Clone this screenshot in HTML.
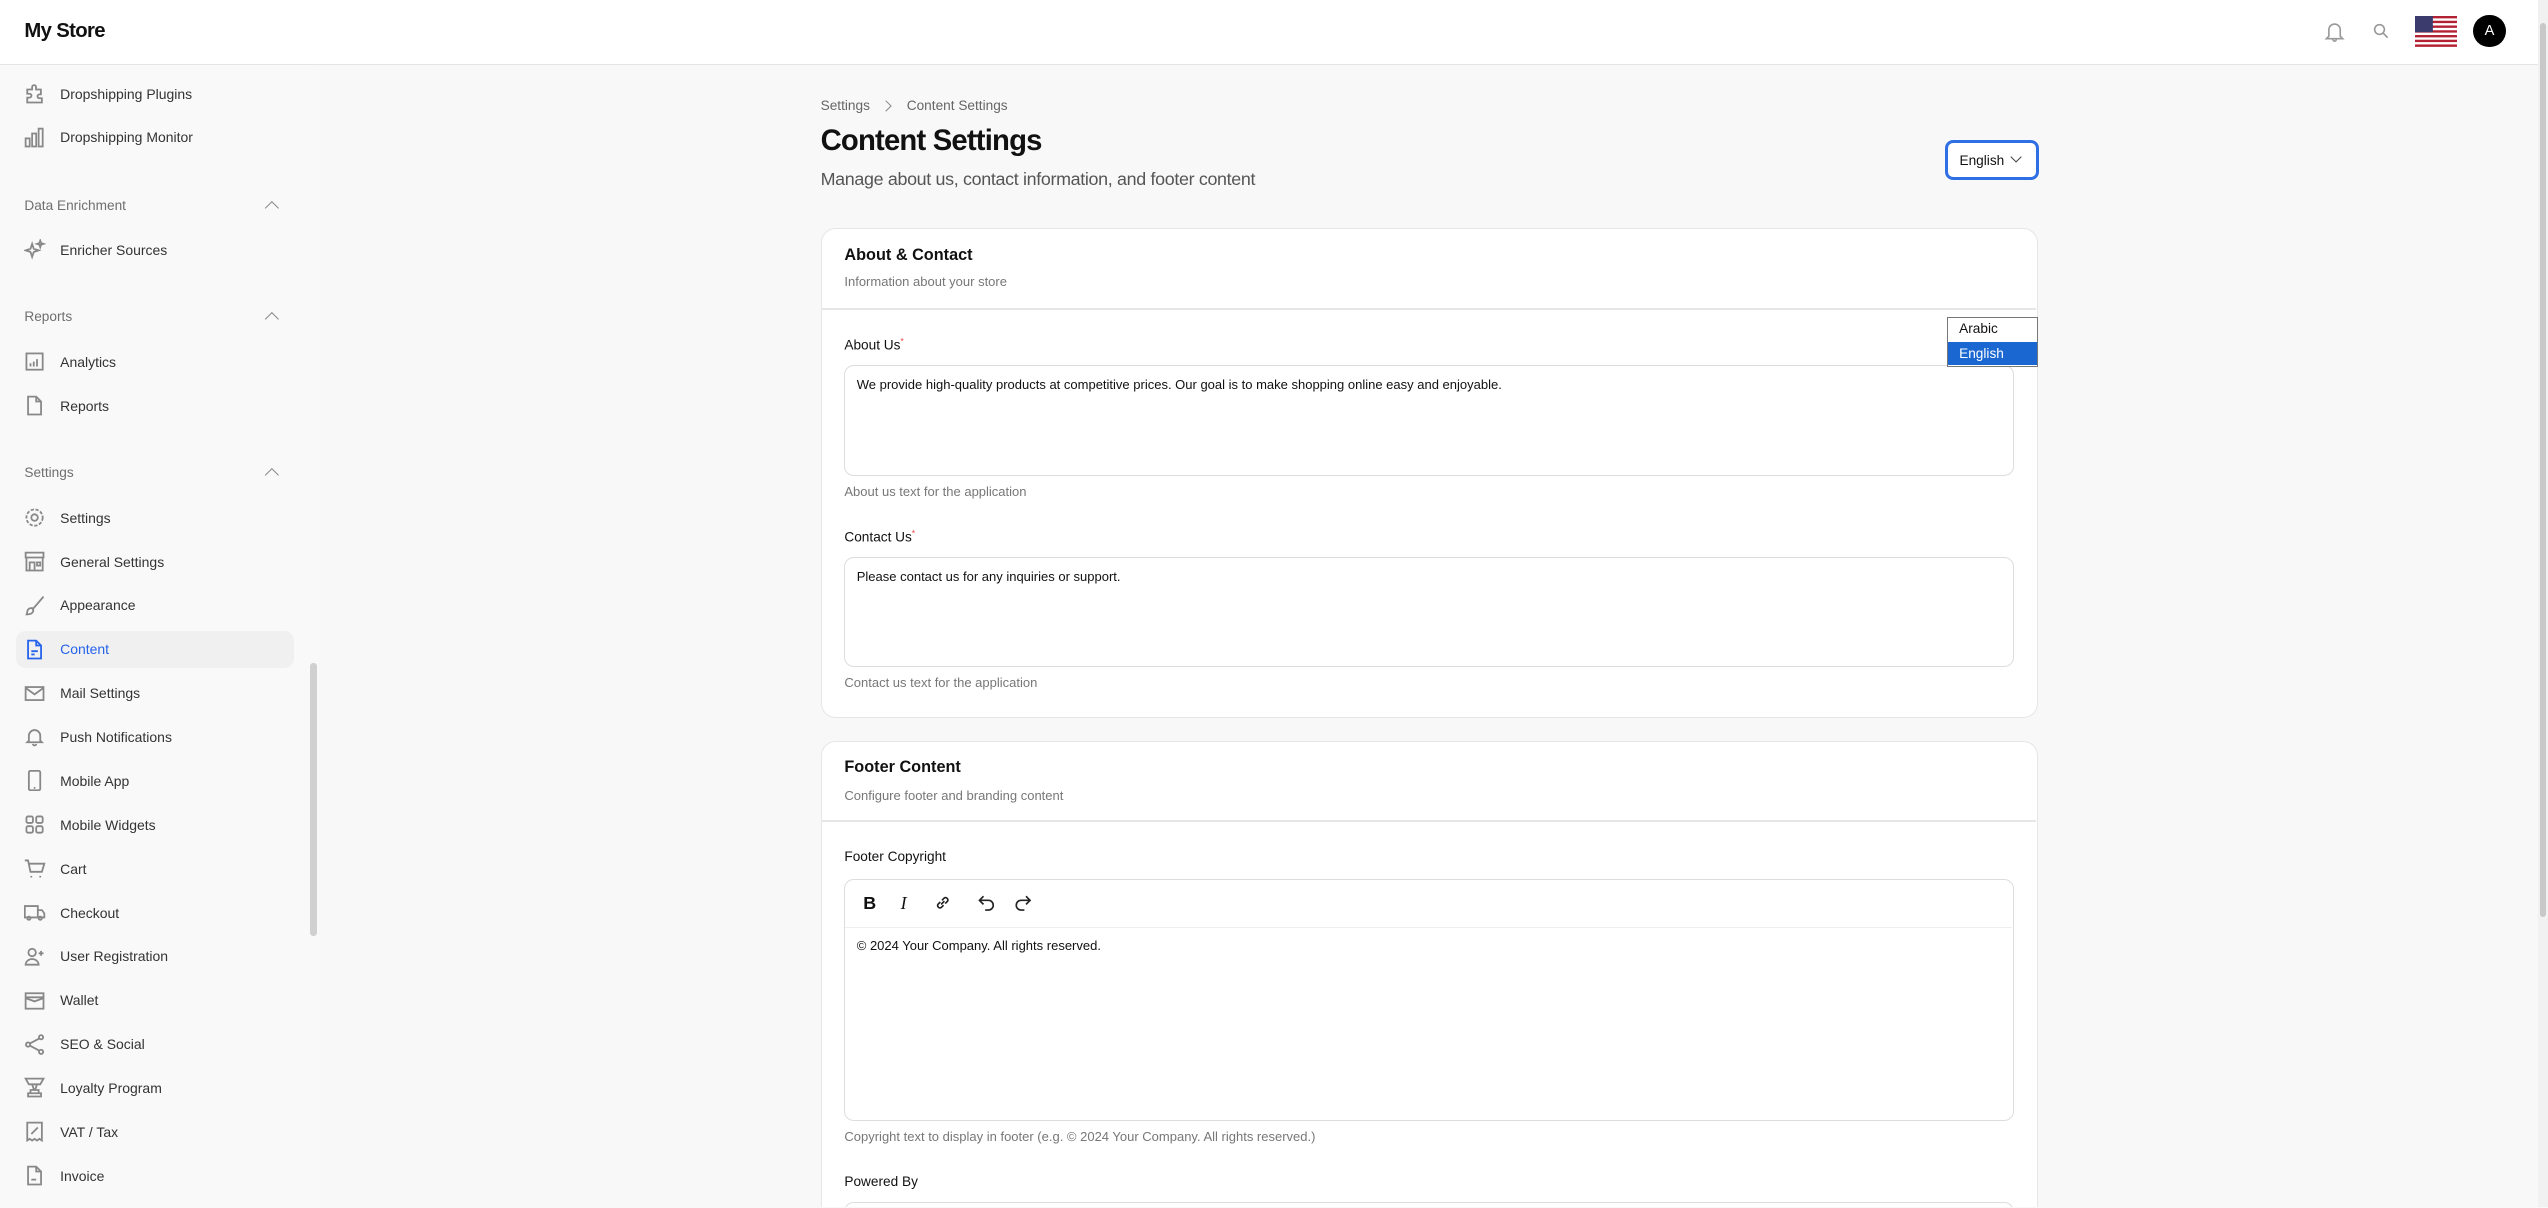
<!DOCTYPE html>
<html><head><meta charset="utf-8"><style>
*{box-sizing:border-box;margin:0;padding:0}
html,body{width:2548px;height:1208px;overflow:hidden;background:#f8f8f8}
#z{zoom:1.625;width:1568px;height:743px;position:relative;font-family:"Liberation Sans",sans-serif;color:#111;overflow:hidden;background:#f8f8f8}
.a{position:absolute;white-space:nowrap}
.hdr{left:0;top:0;width:1562px;height:40px;background:#fff;border-bottom:1px solid #e4e4e4}
.side{left:0;top:40px;width:196px;height:703px;background:#f9f9f9}
.it{position:absolute;left:15px;font-size:8.6px;color:#333;line-height:12px;white-space:nowrap}
.it svg{position:absolute;left:0;top:-1px;width:13px;height:13px;fill:none;stroke:#888;stroke-width:1.1}
.it span{position:absolute;left:22px;top:0;white-space:nowrap}
.sec{position:absolute;left:15px;font-size:8.4px;color:#6f6f6f}
.car{position:absolute;left:164px;width:6px;height:6px;border-left:1px solid #888;border-top:1px solid #888;transform:rotate(45deg)}
.card{position:absolute;left:505px;width:749px;background:#fff;border:1px solid #e6e6e6;border-radius:9px}
.lab{font-size:8.4px;color:#111}
.help{font-size:8px;color:#777}
.ta{position:absolute;left:14px;width:720px;border:1px solid #ddd;border-radius:6px;background:#fff;font-size:8px;padding:7px}
</style></head><body><div id="z">
<div class="a hdr"></div>
<div class="a" style="left:15px;top:12px;font-size:12.5px;font-weight:bold;letter-spacing:-0.4px">My Store</div>
<svg class="a" style="left:1430px;top:12px" width="13" height="14" viewBox="0 0 13 14" fill="none" stroke="#999" stroke-width="1"><path d="M3 10V6a3.5 3.5 0 017 0v4l1.5 1.5h-10z M5.5 12a1 1 0 002 0"/></svg>
<svg class="a" style="left:1460px;top:14px" width="10" height="10" viewBox="0 0 10 10" fill="none" stroke="#999" stroke-width="1"><circle cx="4" cy="4" r="3"/><path d="M6.3 6.3L9 9"/></svg>
<svg class="a" style="left:1486px;top:10px" width="26" height="19" viewBox="0 0 26 19"><rect width="26" height="19" fill="#fff"/><g fill="#b22234"><rect y="0" width="26" height="1.46"/><rect y="2.92" width="26" height="1.46"/><rect y="5.84" width="26" height="1.46"/><rect y="8.77" width="26" height="1.46"/><rect y="11.7" width="26" height="1.46"/><rect y="14.6" width="26" height="1.46"/><rect y="17.5" width="26" height="1.5"/></g><rect width="11" height="10" fill="#3c3b6e"/></svg>
<div class="a" style="left:1522px;top:9px;width:20px;height:20px;border-radius:50%;background:#000;color:#fff;font-size:9px;text-align:center;line-height:20px">A</div>
<div class="a" style="left:1562px;top:0;width:6px;height:743px;background:#f1f1f1"></div>
<div class="a" style="left:1563px;top:14px;width:4px;height:550px;background:#c8c8c8;border-radius:2px"></div>

<div class="a side"></div>
<div class="a" style="left:191px;top:408px;width:4px;height:168px;background:#d0d0d0;border-radius:2px"></div>
<div class="a" style="left:10px;top:388px;width:171px;height:23px;background:#f0f0f0;border-radius:6px"></div>

<div class="it" style="top:52px"><svg viewBox="0 0 13 13"><path d="M2 4h3V2.5a1.2 1.2 0 012.4 0V4h3v3H9.5a1.2 1.2 0 000 2.4H11v2.6H2V9h1.4a1.2 1.2 0 000-2.4H2z"/></svg><span>Dropshipping Plugins</span></div>
<div class="it" style="top:79px"><svg viewBox="0 0 13 13"><rect x="1" y="7" width="2.5" height="5"/><rect x="5" y="4" width="2.5" height="8"/><rect x="9" y="1" width="2.5" height="11"/></svg><span>Dropshipping Monitor</span></div>
<div class="sec" style="top:122px">Data Enrichment</div><div class="car" style="top:125px"></div>
<div class="it" style="top:148px"><svg viewBox="0 0 13 13"><path d="M5 3l1 3 3 1-3 1-1 3-1-3-3-1 3-1z M10 1l.5 1.5L12 3l-1.5.5L10 5l-.5-1.5L8 3l1.5-.5z"/></svg><span>Enricher Sources</span></div>
<div class="sec" style="top:190px">Reports</div><div class="car" style="top:193px"></div>
<div class="it" style="top:217px"><svg viewBox="0 0 13 13"><rect x="1.5" y="1.5" width="10" height="10"/><path d="M4 9.5v-2M6 9.5v-3M8 9.5V5"/></svg><span>Analytics</span></div>
<div class="it" style="top:244px"><svg viewBox="0 0 13 13"><path d="M2.5 1h5l3 3v8h-8z M7.5 1v3h3"/></svg><span>Reports</span></div>
<div class="sec" style="top:286px">Settings</div><div class="car" style="top:289px"></div>
<div class="it" style="top:313px"><svg viewBox="0 0 13 13"><circle cx="6.5" cy="6.5" r="2"/><circle cx="6.5" cy="6.5" r="5" stroke-dasharray="2 1"/></svg><span>Settings</span></div>
<div class="it" style="top:340px"><svg viewBox="0 0 13 13"><path d="M1 1h11v3H1z M1.5 4v8h10V4 M3.5 12V7h3v5 M8 7h2v2H8z"/></svg><span>General Settings</span></div>
<div class="it" style="top:367px"><svg viewBox="0 0 13 13"><path d="M12 1L6 8l-1 1 M5 8c-2 0-3 1-3 2.5S1 12 1 12s3 0 4-1 1-2 0-3z"/></svg><span>Appearance</span></div>
<div class="it" style="top:394px;color:#2563eb"><svg viewBox="0 0 13 13" style="stroke:#2563eb"><path d="M2.5 1h5l3 3v8h-8z M7.5 1v3h3 M4.5 7.5h4M4.5 9.5h2"/></svg><span>Content</span></div>
<div class="it" style="top:421px"><svg viewBox="0 0 13 13"><rect x="1" y="2.5" width="11" height="8"/><path d="M1 3l5.5 4L12 3"/></svg><span>Mail Settings</span></div>
<div class="it" style="top:448px"><svg viewBox="0 0 13 13"><path d="M3 9V6a3.5 3.5 0 017 0v3l1 1H2z M5.5 11a1 1 0 002 0"/></svg><span>Push Notifications</span></div>
<div class="it" style="top:475px"><svg viewBox="0 0 13 13"><rect x="3" y="0.5" width="7" height="12" rx="1"/><path d="M6 11h1"/></svg><span>Mobile App</span></div>
<div class="it" style="top:502px"><svg viewBox="0 0 13 13"><rect x="1.5" y="1.5" width="4" height="4" rx="1"/><rect x="7.5" y="1.5" width="4" height="4" rx="1"/><rect x="1.5" y="7.5" width="4" height="4" rx="1"/><rect x="7.5" y="7.5" width="4" height="4" rx="1"/></svg><span>Mobile Widgets</span></div>
<div class="it" style="top:529px"><svg viewBox="0 0 13 13"><path d="M0.5 1.5h2l1.5 7h7l1.5-5H3 M4.5 11v1M10 11v1"/></svg><span>Cart</span></div>
<div class="it" style="top:556px"><svg viewBox="0 0 13 13"><path d="M0.5 2.5h8v7h-8z M8.5 5h2.5l1.5 2v2.5h-4"/><circle cx="3" cy="10" r="1"/><circle cx="10" cy="10" r="1"/></svg><span>Checkout</span></div>
<div class="it" style="top:583px"><svg viewBox="0 0 13 13"><circle cx="5" cy="4" r="2.3"/><path d="M1 11.5c0-2 2-3.5 4-3.5s4 1.5 4 3.5z M10.5 3v3M9 4.5h3"/></svg><span>User Registration</span></div>
<div class="it" style="top:610px"><svg viewBox="0 0 13 13"><rect x="1" y="2" width="11" height="9.5"/><path d="M1 4.5h11 M1 5l5.5 2L12 5"/></svg><span>Wallet</span></div>
<div class="it" style="top:637px"><svg viewBox="0 0 13 13"><circle cx="2.5" cy="6.5" r="1.3"/><circle cx="10.5" cy="2" r="1.3"/><circle cx="10.5" cy="11" r="1.3"/><path d="M3.7 5.8l5.6-3 M3.7 7.2l5.6 3"/></svg><span>SEO &amp; Social</span></div>
<div class="it" style="top:664px"><svg viewBox="0 0 13 13"><path d="M1 1h11l-2 3.5H3z M5 4.5l1 3h1l1-3 M4 8h5v2H4z M2.5 10h8v2h-8z"/></svg><span>Loyalty Program</span></div>
<div class="it" style="top:691px"><svg viewBox="0 0 13 13"><path d="M2 1h9v11l-1.5-1-1.5 1-1.5-1L5 12l-1.5-1L2 12z M4.5 8l4-4"/></svg><span>VAT / Tax</span></div>
<div class="it" style="top:718px"><svg viewBox="0 0 13 13"><path d="M2.5 1h5l3 3v8h-8z M7.5 1v3h3 M4.5 9h3"/></svg><span>Invoice</span></div>

<div class="a" style="left:505px;top:60px;font-size:8.4px;color:#666">Settings</div>
<div class="a" style="left:543px;top:60px;width:5px;height:5px;border-right:1px solid #888;border-top:1px solid #888;transform:rotate(45deg);margin-top:3px"></div>
<div class="a" style="left:558px;top:60px;font-size:8.4px;color:#666">Content Settings</div>
<div class="a" style="left:505px;top:77px;font-size:18px;font-weight:bold;letter-spacing:-0.5px">Content Settings</div>
<div class="a" style="left:505px;top:104px;font-size:11px;color:#555;letter-spacing:-0.2px">Manage about us, contact information, and footer content</div>
<div class="a" style="left:1197px;top:86px;width:58px;height:25px;border:2px solid #2f6fe4;border-radius:5px;background:#fff;font-size:8.4px;padding:6px 0 0 7px">English</div>
<div class="a" style="left:1238px;top:94px;width:5px;height:5px;border-right:1px solid #444;border-bottom:1px solid #444;transform:rotate(45deg)"></div>

<div class="card" style="top:140px;height:302px">
 <div class="a" style="left:14px;top:11px;font-size:10px;font-weight:bold">About &amp; Contact</div>
 <div class="a help" style="left:14px;top:28px">Information about your store</div>
 <div class="a" style="left:0;top:49px;width:747px;height:1px;background:#e6e6e6"></div>
 <div class="a lab" style="left:14px;top:67px">About Us<sup style="color:#e33;font-size:5px">*</sup></div>
 <div class="ta" style="top:84px;height:68px">We provide high-quality products at competitive prices. Our goal is to make shopping online easy and enjoyable.</div>
 <div class="a help" style="left:14px;top:157px">About us text for the application</div>
 <div class="a lab" style="left:14px;top:185px">Contact Us<sup style="color:#e33;font-size:5px">*</sup></div>
 <div class="ta" style="top:202px;height:68px">Please contact us for any inquiries or support.</div>
 <div class="a help" style="left:14px;top:275px">Contact us text for the application</div>
</div>

<div class="card" style="top:456px;height:300px">
 <div class="a" style="left:14px;top:10px;font-size:10px;font-weight:bold">Footer Content</div>
 <div class="a help" style="left:14px;top:28px">Configure footer and branding content</div>
 <div class="a" style="left:0;top:48px;width:747px;height:1px;background:#e6e6e6"></div>
 <div class="a lab" style="left:14px;top:66px">Footer Copyright</div>
 <div class="a" style="left:14px;top:84px;width:720px;height:149px;border:1px solid #ddd;border-radius:6px;background:#fff">
  <div class="a" style="left:0;top:29px;width:718px;height:1px;background:#eee"></div>
  <div class="a" style="left:11px;top:8px;font-size:11px;font-weight:bold">B</div>
  <div class="a" style="left:34px;top:8px;font-size:11px;font-style:italic;font-family:'Liberation Serif',serif">I</div>
  <svg class="a" style="left:54px;top:8px" width="12" height="12" viewBox="0 0 12 12" fill="none" stroke="#222" stroke-width="1"><path d="M5 7l2-2 M4.5 5.5L3 7a1.5 1.5 0 002 2l1.5-1.5 M7.5 6.5L9 5a1.5 1.5 0 00-2-2L5.5 4.5"/></svg>
  <svg class="a" style="left:81px;top:8px" width="12" height="12" viewBox="0 0 12 12" fill="none" stroke="#222" stroke-width="1"><path d="M4 2L1.5 4.5 4 7 M1.5 4.5H7a3 3 0 010 6H5"/></svg>
  <svg class="a" style="left:103px;top:8px" width="12" height="12" viewBox="0 0 12 12" fill="none" stroke="#222" stroke-width="1"><path d="M8 2l2.5 2.5L8 7 M10.5 4.5H5a3 3 0 000 6h2"/></svg>
  <div class="a" style="left:7px;top:36px;font-size:8px">© 2024 Your Company. All rights reserved.</div>
 </div>
 <div class="a help" style="left:14px;top:238px">Copyright text to display in footer (e.g. © 2024 Your Company. All rights reserved.)</div>
 <div class="a lab" style="left:14px;top:266px">Powered By</div>
 <div class="a" style="left:14px;top:283px;width:720px;height:30px;border:1px solid #ddd;border-radius:6px;background:#fff"></div>
</div>

<div class="a" style="left:1198px;top:195px;width:56px;height:31px;border:1px solid #777;background:#fff;font-size:8.4px">
 <div style="padding:2px 0 0 7px;height:15px">Arabic</div>
 <div style="background:#1a67d2;color:#fff;padding:2px 0 0 7px;height:14px">English</div>
</div>
</div></body></html>
